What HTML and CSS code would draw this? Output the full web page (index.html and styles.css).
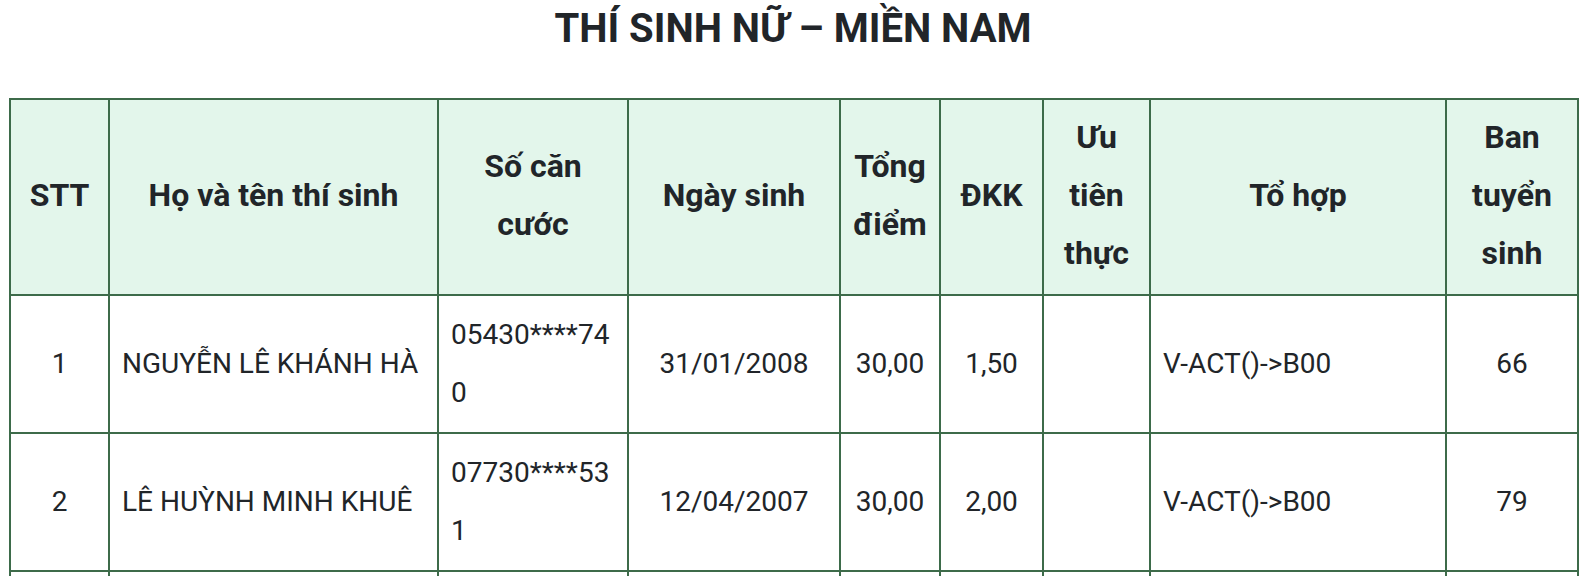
FILE: index.html
```html
<!DOCTYPE html>
<html lang="vi">
<head>
<meta charset="utf-8">
<title>Thí sinh nữ – Miền Nam</title>
<link rel="stylesheet" href="styles.css">
</head>
<body>
<div class="page">
  <h1 class="title">THÍ SINH NỮ – MIỀN NAM</h1>
  <table class="result">
    <colgroup>
      <col class="c-stt">
      <col class="c-name">
      <col class="c-id">
      <col class="c-dob">
      <col class="c-total">
      <col class="c-dkk">
      <col class="c-ut">
      <col class="c-combo">
      <col class="c-ban">
    </colgroup>
    <thead>
      <tr>
        <th>STT</th>
        <th>Họ và tên thí sinh</th>
        <th>Số căn cước</th>
        <th>Ngày sinh</th>
        <th>Tổng điểm</th>
        <th>ĐKK</th>
        <th>Ưu tiên thực</th>
        <th>Tổ hợp</th>
        <th>Ban tuyển sinh</th>
      </tr>
    </thead>
    <tbody>
      <tr>
        <td class="center">1</td>
        <td>NGUYỄN LÊ KHÁNH HÀ</td>
        <td class="wrap">05430****740</td>
        <td class="center">31/01/2008</td>
        <td class="center">30,00</td>
        <td class="center">1,50</td>
        <td class="center"></td>
        <td>V-ACT()-&gt;B00</td>
        <td class="center">66</td>
      </tr>
      <tr>
        <td class="center">2</td>
        <td>LÊ HUỲNH MINH KHUÊ</td>
        <td class="wrap">07730****531</td>
        <td class="center">12/04/2007</td>
        <td class="center">30,00</td>
        <td class="center">2,00</td>
        <td class="center"></td>
        <td>V-ACT()-&gt;B00</td>
        <td class="center">79</td>
      </tr>
      <tr>
        <td class="center">3</td>
        <td>TRẦN NGỌC BẢO TRÂN</td>
        <td class="wrap">07930****215</td>
        <td class="center">05/09/2007</td>
        <td class="center">29,75</td>
        <td class="center">2,00</td>
        <td class="center"></td>
        <td>V-ACT()-&gt;B00</td>
        <td class="center">79</td>
      </tr>
    </tbody>
  </table>
</div>
</body>
</html>
```

FILE: styles.css
```css
html, body {
  margin: 0;
  padding: 0;
  background: #ffffff;
}

body {
  font-family: Roboto, "Noto Sans", "Liberation Sans", sans-serif;
  color: #212529;
}

.page {
  padding: 6px 9px 0;
}

.title {
  margin: 0 0 46px;
  font-size: 40px;
  line-height: 46px;
  font-weight: 700;
  text-align: center;
  color: #212529;
}

.result {
  width: 1568px;
  border-collapse: collapse;
  table-layout: fixed;
  font-size: 28px;
  line-height: 58px;
}

.c-stt { width: 99px; }
.c-name { width: 329px; }
.c-id { width: 190px; }
.c-dob { width: 212px; }
.c-total { width: 100px; }
.c-dkk { width: 103px; }
.c-ut { width: 107px; }
.c-combo { width: 296px; }
.c-ban { width: 132px; }

.result th,
.result td {
  border: 2px solid #3d6b4a;
  padding: 10px 12px;
  vertical-align: middle;
}

.result th {
  padding: 8px 12px 12px;
  background: #e3f6eb;
  font-size: 32px;
  font-weight: 700;
  text-align: center;
}

.result td {
  font-weight: 400;
  text-align: left;
}

.result td.center {
  text-align: center;
}

.result td.wrap {
  overflow-wrap: anywhere;
}
```
